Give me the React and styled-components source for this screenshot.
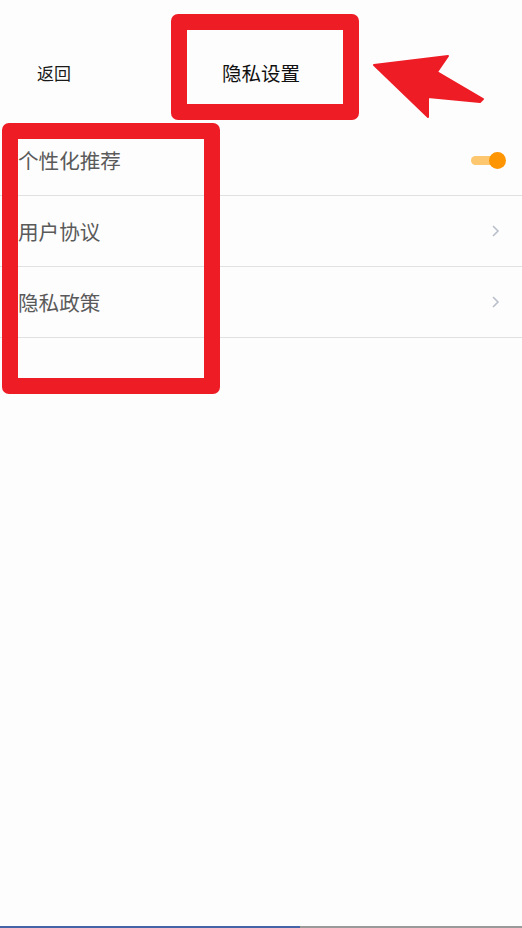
import React from "react";
import styled, { createGlobalStyle } from "styled-components";

const Global = createGlobalStyle`
  html, body {
    margin: 0;
    padding: 0;
    background: #fdfdfd;
  }
  body {
    font-family: "Noto Sans CJK SC", "Noto Sans", sans-serif;
  }
`;

const Page = styled.div`
  position: relative;
  width: 522px;
  height: 928px;
  overflow: hidden;
  background: #fdfdfd;
  display: flex;
  flex-direction: column;
`;

const StatusBar = styled.div`
  height: 22px;
  flex-shrink: 0;
`;

const NavBar = styled.header`
  height: 103px;
  display: grid;
  grid-template-columns: 1fr auto 1fr;
  align-items: center;
  flex-shrink: 0;
`;

const Back = styled.span`
  padding-left: 37px;
  font-size: 17px;
  color: #1a1a1a;
  margin-top: -2px;
`;

const Title = styled.h1`
  margin: -2px 0 0;
  font-size: 19.5px;
  font-weight: 400;
  color: #111;
`;

const List = styled.ul`
  list-style: none;
  margin: 0;
  padding: 0;
`;

const Row = styled.li`
  height: 70px;
  display: flex;
  align-items: center;
  justify-content: space-between;
  padding: 0 18px;
  border-bottom: 1px solid #e1e1e1;
`;

const Label = styled.span`
  font-size: 20.6px;
  color: #5a5a5a;
`;

const Switch = styled.span`
  position: relative;
  width: 32px;
  height: 9px;
  border-radius: 5px;
  background: #fcc76e;
  margin-right: 1px;
`;

const Knob = styled.span`
  position: absolute;
  right: -3px;
  top: 50%;
  width: 17px;
  height: 17px;
  margin-top: -8.5px;
  border-radius: 50%;
  background: #ff9500;
`;

const Chevron = () => (
  <svg width="10" height="14" viewBox="0 0 10 14" style={{ marginRight: 4 }}>
    <path d="M3 2 L8 7 L3 12" fill="none" stroke="#b9c0cb" strokeWidth="1.6" />
  </svg>
);

const Frame = styled.div`
  position: absolute;
  left: ${(p) => p.x}px;
  top: ${(p) => p.y}px;
  width: ${(p) => p.w}px;
  height: ${(p) => p.h}px;
  border: 16px solid #ee1c25;
  border-radius: 7px;
  box-sizing: border-box;
  pointer-events: none;
`;

const Arrow = styled.svg`
  position: absolute;
  left: 0;
  top: 0;
  pointer-events: none;
`;

const BottomBar = styled.div`
  margin-top: auto;
  height: 2px;
  background: linear-gradient(to right, #4564a8 0, #4564a8 300px, #9a9a9a 300px);
`;

const items = [
  { label: "个性化推荐", toggle: true },
  { label: "用户协议" },
  { label: "隐私政策" },
];

export default function App() {
  return (
    <Page>
      <Global />
      <StatusBar />
      <NavBar>
        <Back>返回</Back>
        <Title>隐私设置</Title>
        <span />
      </NavBar>
      <List>
        {items.map((it) => (
          <Row key={it.label}>
            <Label>{it.label}</Label>
            {it.toggle ? (
              <Switch>
                <Knob />
              </Switch>
            ) : (
              <Chevron />
            )}
          </Row>
        ))}
      </List>
      <BottomBar />

      <Frame x={171} y={14} w={188} h={106} />
      <Frame x={2} y={123} w={218} h={271} />
      <Arrow width="522" height="140" viewBox="0 0 522 140">
        <polygon
          points="374,65 448,56 437,72 483,99 480,102 428,97 428,117"
          fill="#ee1c25"
          stroke="#ee1c25"
          strokeLinejoin="round"
          strokeWidth="2"
        />
      </Arrow>
    </Page>
  );
}
